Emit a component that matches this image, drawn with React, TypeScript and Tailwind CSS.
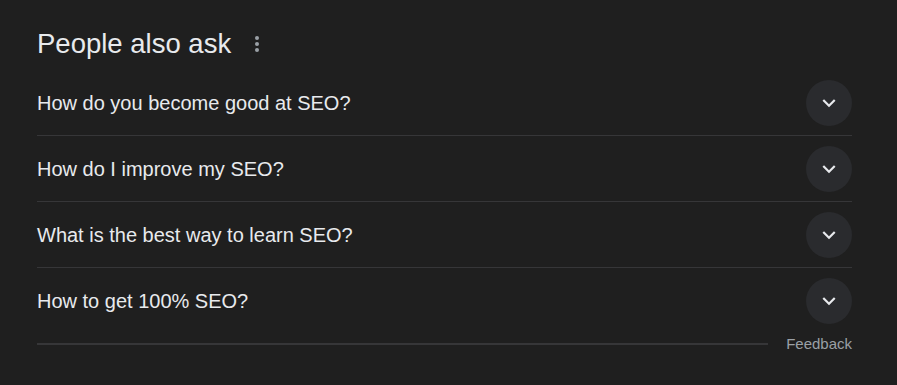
import React from "react";

const questions = [
  "How do you become good at SEO?",
  "How do I improve my SEO?",
  "What is the best way to learn SEO?",
  "How to get 100% SEO?",
];

const Chevron = () => (
  <svg width="26" height="26" viewBox="0 0 24 24" fill="#e8eaed">
    <path d="M7.41 8.59 12 13.17l4.59-4.58L18 10l-6 6-6-6 1.41-1.41z" />
  </svg>
);

const Dots = () => (
  <svg width="24" height="24" viewBox="0 0 24 24" fill="#9aa0a6">
    <circle cx="12" cy="6" r="2" />
    <circle cx="12" cy="12" r="2" />
    <circle cx="12" cy="18" r="2" />
  </svg>
);

export default function App() {
  return (
    <div
      className="w-full h-[385px] bg-[#1f1f1f] text-[#e8eaed] pl-[37px] pr-[45px]"
      style={{ fontFamily: '"Liberation Sans", Arial, sans-serif' }}
    >
      {/* Header */}
      <div className="h-[70px] pt-[18px] flex items-center">
        <h2 className="text-[27.5px] leading-[36px] font-normal">People also ask</h2>
        <div className="ml-[14px] flex items-center">
          <Dots />
        </div>
      </div>

      {/* Questions */}
      <div>
        {questions.map((q, i) => (
          <div
            key={i}
            className={`h-[66px] flex items-center justify-between ${
              i < questions.length - 1 ? "border-b border-[#363638]" : ""
            }`}
          >
            <span className="text-[20px] leading-[26px]">{q}</span>
            <div className="w-[46px] h-[46px] rounded-full bg-[#2a2b2e] flex items-center justify-center">
              <Chevron />
            </div>
          </div>
        ))}
      </div>

      {/* Footer */}
      <div className="h-[20px] flex items-center">
        <div className="flex-1 h-[2px] bg-[#363638]" />
        <span className="ml-[18px] text-[15px] leading-[20px] text-[#9aa0a6]">Feedback</span>
      </div>
    </div>
  );
}
